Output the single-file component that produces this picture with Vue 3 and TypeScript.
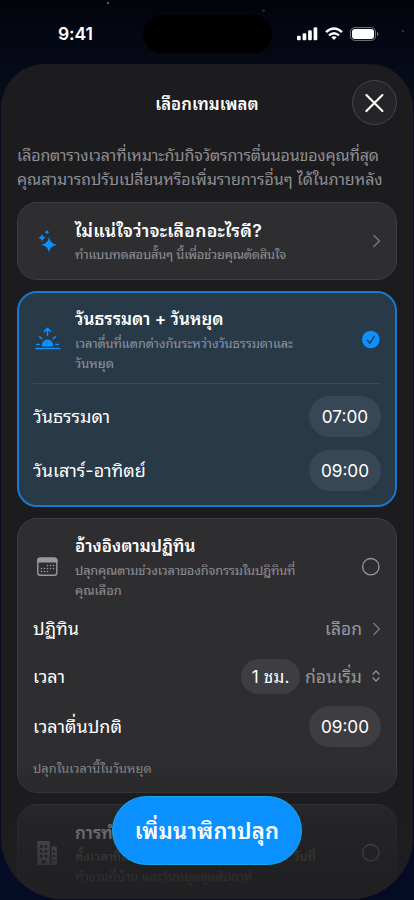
<script setup lang="ts">
import { ref } from 'vue'

type Template = 'week' | 'calendar' | 'work'

const selected = ref<Template>('week')
const weekRows = [
  { label: 'วันธรรมดา', time: '07:00', cls: 'weekday' },
  { label: 'วันเสาร์-อาทิตย์', time: '09:00', cls: 'weekend' },
]
const calendarDots = [
  [15, 12.5], [18, 12.5], [21, 12.5],
  [9, 15.5], [12, 15.5], [15, 15.5], [18, 15.5], [21, 15.5],
  [9, 18.5], [12, 18.5], [15, 18.5],
]
</script>

<template>
  <div class="screen">
    <i class="star s1"></i><i class="star s2"></i><i class="star s3"></i>
    <header class="status">
      <span class="clock">9:41</span>
      <div class="island"></div>
      <div class="signals">
        <svg width="21" height="14" viewBox="0 0 21 14" fill="#fff">
          <rect x="0" y="8.7" width="3.7" height="4.6" rx="1.1" />
          <rect x="5.6" y="6.3" width="3.7" height="7" rx="1.1" />
          <rect x="11.1" y="3.3" width="3.7" height="10" rx="1.1" />
          <rect x="16.6" y="0.3" width="3.7" height="13" rx="1.1" />
        </svg>
        <svg class="wifi" width="18" height="14" viewBox="0 0 18 14" fill="none" stroke="#fff" stroke-width="2.3">
          <path d="M1 5.1Q9-2.2 17 5.1" />
          <path d="M4 8.4Q9 4 14 8.4" />
          <path d="M9 13 6.3 10.3Q9 8.1 11.7 10.3Z" fill="#fff" stroke="none" />
        </svg>
        <svg class="battery" width="29" height="14" viewBox="0 0 29 14">
          <rect x="0.5" y="0.6" width="25" height="12.8" rx="4.2" fill="none" stroke="#77787f" />
          <rect x="2" y="2.1" width="22" height="9.8" rx="2.9" fill="#fff" />
          <path d="M27 5v4.2q1.4-.6 1.4-2.1T27 5" fill="#77787f" />
        </svg>
      </div>
    </header>

    <main class="sheet">
      <div class="nav">
        <h1 class="nav-title">เลือกเทมเพลต</h1>
        <button class="close" aria-label="ปิด">
          <svg width="20" height="20" viewBox="0 0 20 20" fill="none" stroke="#fff" stroke-width="2.1" stroke-linecap="round">
            <path d="M1.400 2.100l16 16M17.400 2.100l-16 16" />
          </svg>
        </button>
      </div>

      <div class="intro">
        <div class="intro-a">เลือกตารางเวลาที่เหมาะกับกิจวัตรการตื่นนอนของคุณที่สุด</div>
        <div class="intro-b">คุณสามารถปรับเปลี่ยนหรือเพิ่มรายการอื่นๆ ได้ในภายหลัง</div>
      </div>

      <section class="card">
        <div class="head">
          <svg class="icon" width="28" height="28" viewBox="0 0 28 28" fill="#0a91ff">
            <path d="M16 9.500Q16.800 16.800 24.200 17.800 16.800 18.800 16 26 15.200 18.800 7.900 17.800 15.200 16.800 16 9.500Z" />
            <path d="M9 6.500Q9.500 10.200 13 10.700 9.500 11.200 9 14.900 8.500 11.200 5 10.700 8.500 10.200 9 6.500Z" />
            <path d="M14 2.600Q14.300 4.900 16.500 5.200 14.300 5.500 14 7.800 13.700 5.500 11.500 5.200 13.700 4.900 14 2.600Z" />
          </svg>
          <div class="copy">
            <div class="title t1">ไม่แน่ใจว่าจะเลือกอะไรดี?</div>
            <div class="desc d1">ทำแบบทดสอบสั้นๆ นี้เพื่อช่วยคุณตัดสินใจ</div>
          </div>
          <svg class="chev" width="8" height="14" viewBox="0 0 8 14"><path d="M.9 1.500 6.400 7 .9 12.500" /></svg>
        </div>
      </section>

      <section class="card" :class="{ active: selected === 'week' }" @click="selected = 'week'">
        <div class="head">
          <svg class="icon" width="28" height="28" viewBox="0 0 28 28" fill="none" stroke="#0a91ff" stroke-width="1.500" stroke-linecap="round" stroke-linejoin="round">
            <path d="M14.500 9.300V3M11.300 5.500l3.200-3.100 3.200 3.100" />
            <path d="M2.700 22.500h24" stroke-width="1.600" />
            <path d="M9 20.500v-1.600a5.500 5.500 0 0 1 11 0v1.600Z" fill="#0a91ff" stroke="none" />
            <path d="M3.600 18.500h2.600M22.800 18.500h2.600M6.700 10.700l2.100 2.100M22.300 10.700l-2.100 2.100" />
          </svg>
          <div class="copy">
            <div class="title t2">วันธรรมดา + วันหยุด</div>
            <div class="desc d2">เวลาตื่นที่แตกต่างกันระหว่างวันธรรมดาและ</div>
            <div class="desc d3">วันหยุด</div>
          </div>
          <svg class="radio" width="18" height="18" viewBox="0 0 18 18">
            <circle cx="8.800" cy="8.500" r="8.800" fill="#0a91ff" />
            <path d="m5.300 9.300 2.600 3L12.300 5.300" fill="none" stroke="#283948" stroke-width="1.400" stroke-linecap="round" stroke-linejoin="round" />
          </svg>
        </div>
        <div class="divider"></div>
        <div v-for="row in weekRows" :key="row.label" class="row week-row">
          <span class="label" :class="row.cls">{{ row.label }}</span>
          <span class="pill">{{ row.time }}</span>
        </div>
      </section>

      <section class="card tall" @click="selected = 'calendar'">
        <div class="head">
          <svg class="icon" width="28" height="28" viewBox="0 0 28 28">
            <rect x="4.800" y="5.300" width="19" height="17" rx="2.500" fill="none" stroke="#98989e" stroke-width="1.400" />
            <path d="M4.100 9.500V7a2.600 2.600 0 0 1 2.600-2.500h15.200A2.600 2.600 0 0 1 24.500 7v2.500Z" fill="#98989e" />
            <circle v-for="[x, y] in calendarDots" :key="`${x}-${y}`" :cx="x - 0.500" :cy="y" r="0.800" fill="#98989e" />
          </svg>
          <div class="copy">
            <div class="title t3">อ้างอิงตามปฏิทิน</div>
            <div class="desc d4">ปลุกคุณตามช่วงเวลาของกิจกรรมในปฏิทินที่</div>
            <div class="desc d5">คุณเลือก</div>
          </div>
          <svg class="radio" width="18" height="18" viewBox="0 0 18 18"><circle cx="8.800" cy="8.700" r="8.200" fill="none" stroke="#98989e" stroke-width="1.300" /></svg>
        </div>
        <div class="row r1">
          <span class="label l3">ปฏิทิน</span>
          <span class="value v1">เลือก</span>
          <svg class="chev" width="8" height="14" viewBox="0 0 8 14"><path d="M.9 1.500 6.400 7 .9 12.500" /></svg>
        </div>
        <div class="row r2">
          <span class="label l4">เวลา</span>
          <span class="pill small"><span class="p1">1 ชม.</span></span>
          <span class="value v2">ก่อนเริ่ม</span>
          <svg class="updown" width="8" height="12" viewBox="0 0 8 12"><path d="M1 4l3-3 3 3M1 8l3 3 3-3" /></svg>
        </div>
        <div class="row r3">
          <span class="label l5">เวลาตื่นปกติ</span>
          <span class="pill">09:00</span>
        </div>
        <div class="desc note">ปลุกในเวลานี้ในวันหยุด</div>
      </section>

      <section class="card last" @click="selected = 'work'">
        <div class="head">
          <svg class="icon" width="28" height="28" viewBox="0 0 28 28">
            <path d="M5.800 2h9.600a1.500 1.500 0 0 1 1.500 1.500V26H4.300V3.500A1.500 1.500 0 0 1 5.800 2ZM18.400 7.300h4a1.500 1.500 0 0 1 1.500 1.500V26h-5.500Z" fill="#98989e" />
            <path d="M7 6h2.600v2.800H7zM11.600 6h2.600v2.800h-2.600zM7 11h2.600v2.800H7zM11.600 11h2.600v2.800h-2.600zM7 16h2.600v2.800H7zM11.600 16h2.600v2.800h-2.600zM8.500 21.500h4.200V24.500H8.500zM19.500 11.500h2.400v2h-2.400zM19.500 16h2.400v2h-2.400zM19.500 20.500h2.400v2h-2.400z" fill="#2e2e30" />
          </svg>
          <div class="copy">
            <div class="title t4">การทำ</div>
            <div class="desc d6"><span>ตั้งเวลาที่แ</span><span>วันที่</span></div>
            <div class="desc d7">ทำงานที่บ้าน และวันหยุดสุดสัปดาห์</div>
          </div>
          <svg class="radio" width="18" height="18" viewBox="0 0 18 18"><circle cx="8.800" cy="8.700" r="8.200" fill="none" stroke="#98989e" stroke-width="1.300" /></svg>
        </div>
      </section>
      <div class="fade"></div>
    </main>
    <button class="cta"><span>เพิ่มนาฬิกาปลุก</span></button>
  </div>
</template>

<style>
body { background: #02040c; }
</style>

<style scoped>
* { box-sizing: border-box; }
.screen {
  position: relative;
  width: 414px;
  height: 900px;
  overflow: hidden;
  display: flex;
  flex-direction: column;
  font-family: Inter, "Noto Sans Thai Looped", "Noto Looped Thai", "Sukhumvit Set", Thonburi, Loma, Garuda, Waree, "Noto Sans Thai", "Noto Sans", sans-serif;
  color: #fff;
  white-space: nowrap;
  background: linear-gradient(180deg, #02040c 0, #060916 64px, #0b1020 130px, #080d24 780px, #050b24 900px);
}
.star { position: absolute; width: 2px; height: 2px; border-radius: 50%; background: #777b86; }
.s1 { left: 107px; top: 2px; }
.s2 { left: 262px; top: 9px; background: #222430; width: 3px; height: 3px; }
.s3 { left: 402px; top: 30px; background: #444753; }
.status { height: 64px; flex: none; display: flex; align-items: flex-start; }
.clock { width: 85px; margin: 23px 0 0 58px; font-size: 17.500px; line-height: 22px; font-weight: 600; letter-spacing: -0.1px; }
.island { width: 129px; height: 38px; margin-top: 15px; border-radius: 19px; background: #000; }
.signals { display: flex; margin: 27px 0 0 24.500px; }
.wifi { margin-left: 7px; }
.battery { margin-left: 7px; }
.sheet {
  position: relative;
  width: 412px;
  height: 835px;
  margin-left: 1px;
  padding: 0 16px;
  flex: none;
  overflow: hidden;
  border-radius: 44px 44px 62px 62px;
  background: #1c1c1e;
}
.nav { height: 80px; display: grid; grid-template-columns: 45px 1fr 45px; padding-top: 16px; }
.nav-title { grid-column: 2; margin: 0; line-height: 48px; text-align: center; font-size: 16.800px; font-weight: 600; }
.close {
  width: 45px; height: 45px; padding: 0; display: grid; place-items: center;
  border: 1px solid #47474b; border-radius: 50%; background: #252528;
}
.intro { height: 58px; font-size: 16px; line-height: 23.500px; color: #8f8f95; }
.intro-a { letter-spacing: -0.170px; }
.intro-b { letter-spacing: -0.050px; }
.card {
  border: 1px solid #3e3e40;
  border-radius: 20px;
  background: #2e2e30;
  padding: 15px 15px 0;
  height: 78px;
  margin-bottom: 11px;
}
.card.active { height: 216px; padding: 14px 14px 0; border: 2px solid #1b78c8; background: #283948; }
.card.tall { height: 275px; }
.card.last { height: 120px; }
.head { display: flex; align-items: center; }
.icon { flex: none; margin-right: 14px; }
.copy { flex: 1; min-width: 0; }
.title { height: 24px; margin-bottom: 2px; line-height: 26px; font-size: 17px; font-weight: 600; }
.t1 { font-size: 17.600px; letter-spacing: 0.270px; }
.t2, .t3 { line-height: 25px; letter-spacing: 0.050px; }
.desc { height: 19.500px; line-height: 21px; font-size: 12.900px; color: #8f8f95; }
.d1 { letter-spacing: -0.230px; }
.d2 { letter-spacing: -0.110px; }
.d4 { letter-spacing: -0.190px; }
.d7 { letter-spacing: -0.130px; }
.active .desc { color: #8a96a3; }
.chev { flex: none; fill: none; stroke: #77777c; stroke-width: 1.500; stroke-linecap: round; stroke-linejoin: round; }
.radio { flex: none; margin-right: 1.500px; overflow: visible; }
.divider { height: 1px; margin: 11px 0 12px; background: #384957; }
.row { display: flex; align-items: center; font-size: 18px; }
.label { flex: 1; padding-bottom: 3px; }
.week-row { height: 41px; margin-bottom: 13px; }
.pill {
  display: grid; place-items: center; width: 72px; height: 41px; border-radius: 20.500px;
  background: #3e3e42; font-size: 17.200px;
}
.active .pill { background: #384756; }
.pill.small { width: 59px; height: 35px; border-radius: 17.500px; font-size: 17px; }
.p1 { padding-bottom: 2px; letter-spacing: 0.200px; }
.value { color: #98989e; font-size: 17.500px; padding-bottom: 3px; }
.r1 { height: 41px; margin-top: 9px; }
.r1 .value { margin-right: 11px; }
.r2 { height: 54px; }
.r2 .value { margin: 0 10px 0 5px; }
.r3 { height: 46px; }
.updown { margin-right: 1px; fill: none; stroke: #98989e; stroke-width: 1.200; stroke-linecap: round; stroke-linejoin: round; }
.note { margin-top: 9px; }
.d6 { display: flex; justify-content: space-between; width: 241px; }
.fade {
  position: absolute; left: 0; right: 0; bottom: 0; height: 140px; pointer-events: none;
  background: linear-gradient(180deg, rgba(30,30,32,0), rgba(30,30,32,.62) 66px, rgba(30,30,32,.85) 115px);
}
.cta {
  position: absolute; left: 112px; top: 796px; width: 190px; height: 69px; padding: 0 0 4px;
  border: 1px solid #18a7e8; border-radius: 34.500px; background: #0a91ff;
  color: #fff; font: inherit; font-size: 22px; font-weight: 600; letter-spacing: 0.200px;
}
</style>
